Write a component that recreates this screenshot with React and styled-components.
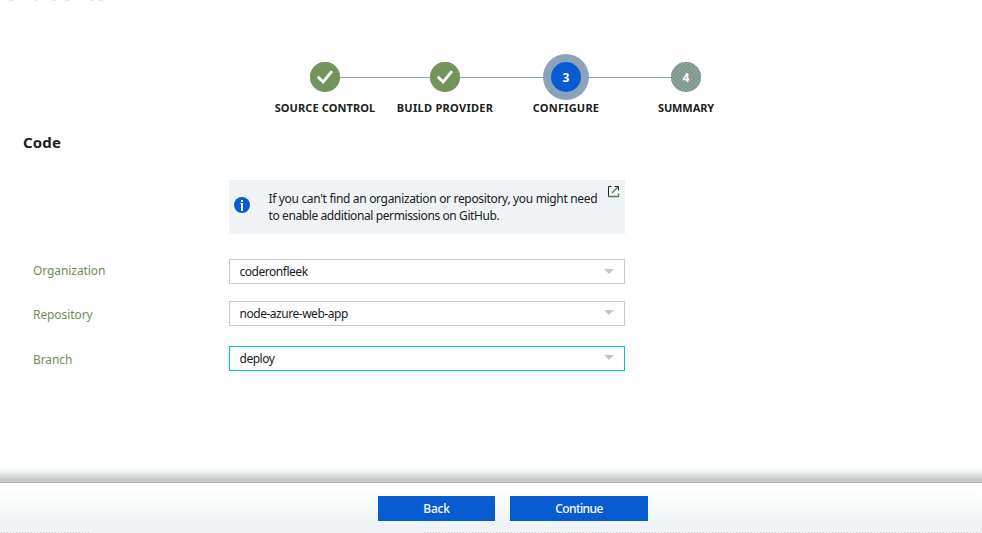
import React from "react";
import styled, { createGlobalStyle } from "styled-components";

const Global = createGlobalStyle`
  * { box-sizing: border-box; }
  body { margin: 0; background: #fff; overflow: hidden; }
`;

const Page = styled.div`
  display: flex;
  flex-direction: column;
  width: 982px;
  height: 533px;
  overflow: hidden;
  background: #fff;
  color: #1b201d;
  font: 12px/17px "Noto Sans", "Open Sans", sans-serif;
`;

const ScrolledEdge = styled.svg`
  display: block;
  height: 2px;
  width: 130px;
`;

const Stepper = styled.ol`
  display: grid;
  grid-template-columns: 120px 120px 122px 118px;
  width: 480px;
  height: 65px;
  margin: 52px 0 0 265px;
  padding: 0;
  list-style: none;
`;

const StepItem = styled.li`
  display: flex;
  flex-direction: column;
  align-items: center;
`;

const Track = styled.div`
  display: grid;
  grid-template-columns: 1fr auto 1fr;
  align-items: center;
  width: 100%;
  height: 46px;
`;

const Line = styled.span`
  height: 1px;
  background: ${(p) => (p.$hidden ? "transparent" : "#8aa2bb")};
`;

const tones = {
  done: "#74935a",
  active: "#075cd2",
  pending: "repeating-conic-gradient(#7f9973 0 25%, #8ca2b4 0 50%) 0 0 / 4px 4px",
};

const Halo = styled.span`
  display: flex;
  padding: ${(p) => (p.$on ? "8px" : "0")};
  border-radius: 50%;
  background: #8ca2bb;
`;

const Circle = styled.span`
  display: flex;
  align-items: center;
  justify-content: center;
  width: 30px;
  height: 30px;
  border-radius: 50%;
  background: ${(p) => tones[p.$state]};
  color: #fff;
  font-weight: 700;
  font-size: 12px;
`;

const StepLabel = styled.span`
  font-weight: 700;
  font-size: 11px;
  line-height: 16px;
  white-space: nowrap;
  letter-spacing: ${(p) => p.$track || 0}px;
`;

const Heading = styled.h2`
  margin: 13px 0 0 23px;
  height: 20px;
  font-size: 15px;
  line-height: 20px;
  font-weight: 700;
  letter-spacing: 0.15px;
`;

const Notice = styled.section`
  display: flex;
  width: 396px;
  height: 54px;
  margin: 28px 0 25px 229px;
  background: #eff3f6;
`;

const InfoIcon = styled.svg`
  width: 16px;
  height: 16px;
  margin: 17px 18px 0 5px;
  flex: none;
`;

const NoticeText = styled.p`
  width: 335px;
  margin: 10px 0 0;
  padding-left: 0.5px;
  line-height: 17px;
`;

const NoticeLine = styled.span`
  display: block;
  white-space: nowrap;
  letter-spacing: ${(p) => p.$track || 0}px;
`;

const OpenIcon = styled.svg`
  width: 13px;
  height: 13px;
  margin-top: 5px;
  margin-left: 4px;
  flex: none;
`;

const Field = styled.div`
  display: grid;
  grid-template-columns: 196px 396px;
  height: 25px;
  margin: 0 0 ${(p) => p.$gap}px 33px;
`;

const FieldLabel = styled.label`
  margin-top: ${(p) => p.$drop}px;
  color: #6f8d59;
  letter-spacing: -0.08px;
`;

const Select = styled.div`
  display: flex;
  justify-content: space-between;
  align-items: flex-start;
  padding: 3px 10px 0 9.5px;
  border: 1px solid ${(p) => (p.$focused ? "#08bce8" : "#c9c9c9")};
  background: #fff;
  letter-spacing: -0.47px;
`;

const Caret = styled.svg`
  width: 10px;
  height: 5px;
  margin-top: ${(p) => p.$drop}px;
`;

const Spacer = styled.div`
  flex: 1;
`;

const FooterShadow = styled.div`
  height: 17px;
  border-bottom: 1px solid #a3afc0;
  background: linear-gradient(#fff, #eff3f6 6px, #e3e6e8 8px, #c9c9c9 13px, #c9c9c9);
`;

const Footer = styled.footer`
  display: flex;
  gap: 15px;
  height: 50px;
  padding: 13px 0 0 378px;
  background:
    linear-gradient(#eff3f6, #eff3f6) 91px 49px / 331px 1px no-repeat,
    linear-gradient(90deg, transparent 1px, #c9c9c9 1px, #c9c9c9 2px, transparent 2px) 0 49px / 3px 1px repeat-x,
    linear-gradient(#fff 8px, #eff3f6 40px);
`;

const Button = styled.button`
  width: ${(p) => p.$width}px;
  height: 25px;
  padding: 0;
  border: 0;
  background: #075cd2;
  color: #fff;
  font: 500 12px/25px "Noto Sans", "Open Sans", sans-serif;
  letter-spacing: ${(p) => p.$track || 0}px;
`;

const steps = [
  { label: "SOURCE CONTROL", state: "done", track: 0.1 },
  { label: "BUILD PROVIDER", state: "done", track: 0.3 },
  { label: "CONFIGURE", state: "active", track: 0.22 },
  { label: "SUMMARY", state: "pending", track: -0.1 },
];

const fields = [
  { label: "Organization", value: "coderonfleek", gap: 17, labelDrop: 3, caretDrop: 6 },
  { label: "Repository", value: "node-azure-web-app", gap: 20, labelDrop: 5, caretDrop: 5 },
  { label: "Branch", value: "deploy", gap: 0, labelDrop: 5, caretDrop: 5, focused: true },
];

function Check() {
  return (
    <svg width="18" height="16" viewBox="0 0 18 16">
      <path d="M1.8 7.8 7.2 13 16 2.2" fill="none" stroke="#fff" strokeWidth="2.8" />
    </svg>
  );
}

export default function App() {
  return (
    <Page>
      <Global />
      <ScrolledEdge viewBox="0 0 130 2">
        <path d="M9 0h4M35 0h2M52 0h4M65 0h4M90 0h3M99 0h4" stroke="#e6e6e6" strokeWidth="2" />
      </ScrolledEdge>
      <Stepper>
        {steps.map((s, i) => (
          <StepItem key={s.label}>
            <Track>
              <Line $hidden={i === 0} />
              <Halo $on={s.state === "active"}>
                <Circle $state={s.state}>{s.state === "done" ? <Check /> : i + 1}</Circle>
              </Halo>
              <Line $hidden={i === steps.length - 1} />
            </Track>
            <StepLabel $track={s.track}>{s.label}</StepLabel>
          </StepItem>
        ))}
      </Stepper>
      <Heading>Code</Heading>
      <Notice>
        <InfoIcon viewBox="0 0 16 16">
          <circle cx="8" cy="8" r="8" fill="#075cd2" />
          <path d="M7 3H9V5H7ZM6.5 6H9V14H7V7H6.5Z" fill="#fff" />
        </InfoIcon>
        <NoticeText>
          <NoticeLine $track={-0.33}>
            If you can't find an organization or repository, you might need
          </NoticeLine>
          <NoticeLine $track={-0.4}>to enable additional permissions on GitHub.</NoticeLine>
        </NoticeText>
        <OpenIcon viewBox="0 0 13 13" fill="none">
          <path d="M4.5 1.5H1.5V11.5" stroke="#1f2a22" />
          <path d="M1 11.5H11.5V8.5M11 2 5 8" stroke="#5d7d48" strokeWidth="1.3" />
          <path d="M7.5 1.5H11.5V5.5" stroke="#1f2a22" />
        </OpenIcon>
      </Notice>
      {fields.map((f) => (
        <Field key={f.label} $gap={f.gap}>
          <FieldLabel $drop={f.labelDrop}>{f.label}</FieldLabel>
          <Select $focused={f.focused}>
            {f.value}
            <Caret $drop={f.caretDrop} viewBox="0 0 10 5">
              <path d="M0 0H10L5 5Z" fill="#c4c4c4" />
            </Caret>
          </Select>
        </Field>
      ))}
      <Spacer />
      <FooterShadow />
      <Footer>
        <Button $width={117} $track={-0.2}>Back</Button>
        <Button $width={138} $track={-0.6}>Continue</Button>
      </Footer>
    </Page>
  );
}
